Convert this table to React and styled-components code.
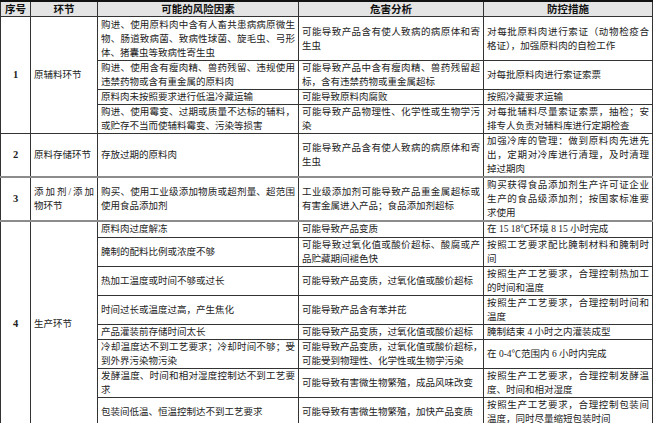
import React from 'react';
import styled, { createGlobalStyle } from 'styled-components';

const GlobalStyle = createGlobalStyle`
  html, body {
    margin: 0;
    padding: 0;
    background: #fff;
  }
  body {
    font-family: "Liberation Serif", "Noto Sans CJK SC", serif;
  }
`;

const Table = styled.table`
  border-collapse: collapse;
  table-layout: fixed;
  width: 652px;
  border-top: 2px solid #111;
  border-bottom: 3px solid #111;
  color: #222;
  font-size: 9.5px;
  line-height: 14px;
`;

const HeadRow = styled.tr`
  height: 15px;
`;

const Th = styled.th`
  background: #e4e4e4;
  border: 1px solid #333;
  border-top: 2px solid #111;
  padding: 0;
  font-family: "Noto Sans CJK SC", sans-serif;
  font-weight: 700;
  font-size: 10.5px;
  line-height: 14px;
  color: #111;
  text-align: center;
`;

const Row = styled.tr`
  height: ${p => p.$h}px;
`;

const Td = styled.td`
  border: 1px solid #333;
  ${p => p.$sep && 'border-top: 2px solid #8c8c8c;'}
  padding: 0 3px;
  vertical-align: middle;
  text-align: left;
`;

const NoCell = styled(Td)`
  text-align: center;
  font-weight: 700;
  font-size: 10.5px;
  padding: 0;
`;

const Line = styled.div`
  white-space: nowrap;
  text-align: ${p => (p.$full ? 'justify' : 'left')};
  text-align-last: ${p => (p.$full ? 'justify' : 'auto')};
`;

const groups = [
  {
    no: '1',
    stage: ['原辅料环节'],
    rows: [
      {
        h: 44,
        risk: ['购进、使用原料肉中含有人畜共患病病原微生', '物、肠道致病菌、致病性球菌、旋毛虫、弓形', '体、猪囊虫等致病性寄生虫'],
        harm: ['可能导致产品含有使人致病的病原体和寄', '生虫'],
        ctrl: ['对每批原料肉进行索证（动物检疫合', '格证），加强原料肉的自检工作'],
      },
      {
        h: 28,
        risk: ['购进、使用含有瘦肉精、兽药残留、违规使用', '违禁药物或含有重金属的原料肉'],
        harm: ['可能导致产品中含有瘦肉精、兽药残留超', '标，含有违禁药物或重金属超标'],
        ctrl: ['对每批原料肉进行索证索票'],
      },
      {
        h: 15,
        risk: ['原料肉未按照要求进行低温冷藏运输'],
        harm: ['可能导致原料肉腐败'],
        ctrl: ['按照冷藏要求运输'],
      },
      {
        h: 28,
        risk: ['购进、使用霉变、过期或质量不达标的辅料，', '或贮存不当而使辅料霉变、污染等损害'],
        harm: ['可能导致产品物理性、化学性或生物学污', '染'],
        ctrl: ['对每批辅料尽量索证索票，抽检；安', '排专人负责对辅料库进行定期检查'],
      },
    ],
  },
  {
    no: '2',
    stage: ['原料存储环节'],
    rows: [
      {
        h: 43,
        risk: ['存放过期的原料肉'],
        harm: ['可能导致产品含有使人致病的病原体和寄', '生虫'],
        ctrl: ['加强冷库的管理：做到原料肉先进先', '出，定期对冷库进行清理，及时清理', '掉过期肉'],
      },
    ],
  },
  {
    no: '3',
    sep: true,
    stage: ['添加剂/添加', '物环节'],
    rows: [
      {
        h: 42,
        risk: ['购买、使用工业级添加物质或超剂量、超范围', '使用食品添加剂'],
        harm: ['工业级添加剂可能导致产品重金属超标或', '有害金属进入产品；食品添加剂超标'],
        ctrl: ['购买获得食品添加剂生产许可证企业', '生产的食品级添加剂；按国家标准要', '求使用'],
      },
    ],
  },
  {
    no: '4',
    sep: true,
    stage: ['生产环节'],
    rows: [
      { h: 16, risk: ['原料肉过度解冻'], harm: ['可能导致产品变质'], ctrl: ['在 15 18℃环境 8 15 小时完成'] },
      {
        h: 29,
        risk: ['腌制的配料比例或浓度不够'],
        harm: ['可能导致过氧化值或酸价超标、酸腐或产', '品贮藏期间褪色快'],
        ctrl: ['按照工艺要求配比腌制材料和腌制时', '间'],
      },
      {
        h: 28,
        risk: ['热加工温度或时间不够或过长'],
        harm: ['可能导致产品变质，过氧化值或酸价超标'],
        ctrl: ['按照生产工艺要求，合理控制热加工', '的时间和温度'],
      },
      {
        h: 29,
        risk: ['时间过长或温度过高，产生焦化'],
        harm: ['可能导致产品含有苯并芘'],
        ctrl: ['按照生产工艺要求，合理控制时间和', '温度'],
      },
      {
        h: 15,
        risk: ['产品灌装前存储时间太长'],
        harm: ['可能导致产品变质，过氧化值或酸价超标'],
        ctrl: ['腌制结束 4 小时之内灌装成型'],
      },
      {
        h: 28,
        risk: ['冷却温度达不到工艺要求；冷却时间不够；受', '到外界污染物污染'],
        harm: ['可能导致产品变质，过氧化值或酸价超标，', '可能受到物理性、化学性或生物学污染'],
        ctrl: ['在 0-4℃范围内 6 小时内完成'],
      },
      {
        h: 29,
        risk: ['发酵温度、时间和相对湿度控制达不到工艺要', '求'],
        harm: ['可能导致有害微生物繁殖，成品风味改变'],
        ctrl: ['按照生产工艺要求，合理控制发酵温', '度、时间和相对湿度'],
      },
      {
        h: 30,
        risk: ['包装间低温、恒温控制达不到工艺要求'],
        harm: ['可能导致有害微生物繁殖，加快产品变质'],
        ctrl: ['按照生产工艺要求，合理控制包装间', '温度，同时尽量缩短包装时间'],
      },
    ],
  },
];

function Lines({ items }) {
  return items.map((t, i) => (
    <Line key={i} $full={i < items.length - 1}>
      {t}
    </Line>
  ));
}

export default function App() {
  return (
    <>
      <GlobalStyle />
      <Table>
        <colgroup>
          <col style={{ width: 30 }} />
          <col style={{ width: 67 }} />
          <col style={{ width: 201 }} />
          <col style={{ width: 185 }} />
          <col style={{ width: 169 }} />
        </colgroup>
        <thead>
          <HeadRow>
            <Th>序号</Th>
            <Th>环节</Th>
            <Th>可能的风险因素</Th>
            <Th>危害分析</Th>
            <Th>防控措施</Th>
          </HeadRow>
        </thead>
        <tbody>
          {groups.map(g =>
            g.rows.map((r, i) => (
              <Row key={g.no + '-' + i} $h={r.h}>
                {i === 0 && (
                  <>
                    <NoCell rowSpan={g.rows.length} $sep={g.sep}>{g.no}</NoCell>
                    <Td rowSpan={g.rows.length} $sep={g.sep}>
                      <Lines items={g.stage} />
                    </Td>
                  </>
                )}
                <Td $sep={i === 0 && g.sep}><Lines items={r.risk} /></Td>
                <Td $sep={i === 0 && g.sep}><Lines items={r.harm} /></Td>
                <Td $sep={i === 0 && g.sep}><Lines items={r.ctrl} /></Td>
              </Row>
            ))
          )}
        </tbody>
      </Table>
    </>
  );
}
